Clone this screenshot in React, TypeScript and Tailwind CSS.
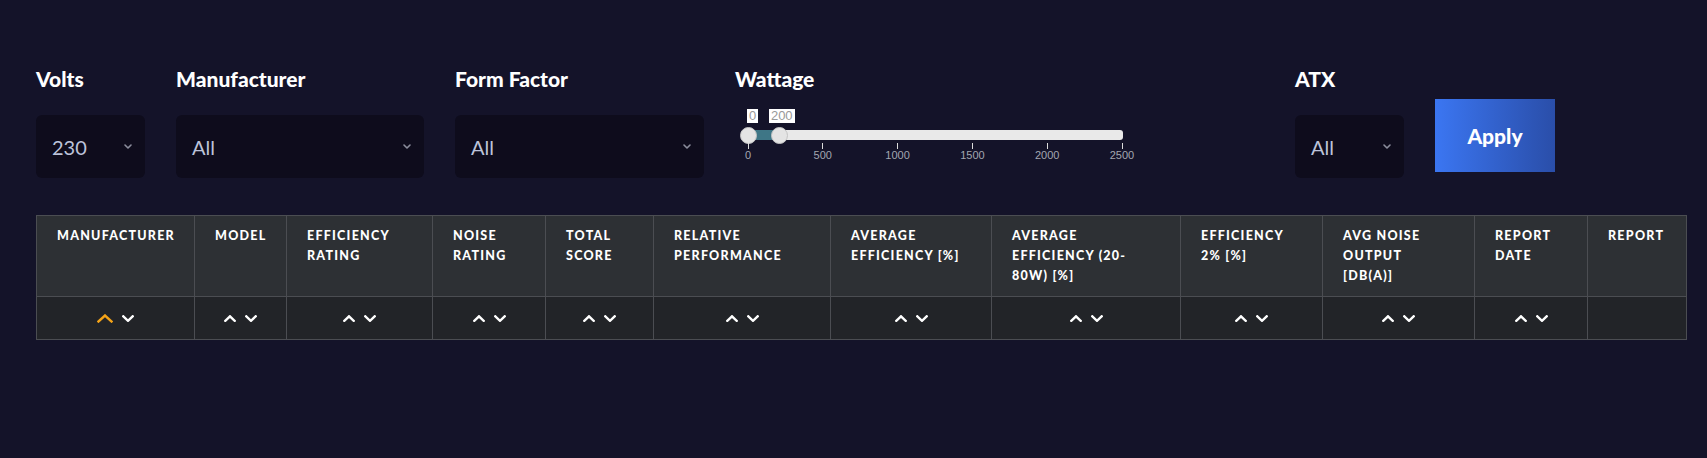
import React from 'react';

const columns: { lines: string[]; width: number; sortable: boolean; active?: boolean }[] = [
    { lines: ['MANUFACTURER'], width: 158, sortable: true, active: true },
    { lines: ['MODEL'], width: 92, sortable: true },
    { lines: ['EFFICIENCY', 'RATING'], width: 146, sortable: true },
    { lines: ['NOISE', 'RATING'], width: 113, sortable: true },
    { lines: ['TOTAL', 'SCORE'], width: 108, sortable: true },
    { lines: ['RELATIVE', 'PERFORMANCE'], width: 177, sortable: true },
    { lines: ['AVERAGE', 'EFFICIENCY [%]'], width: 161, sortable: true },
    { lines: ['AVERAGE', 'EFFICIENCY (20-', '80W) [%]'], width: 189, sortable: true },
    { lines: ['EFFICIENCY', '2% [%]'], width: 142, sortable: true },
    { lines: ['AVG NOISE', 'OUTPUT', '[DB(A)]'], width: 152, sortable: true },
    { lines: ['REPORT', 'DATE'], width: 113, sortable: true },
    { lines: ['REPORT'], width: 99, sortable: false },
];

const ticks = [0, 500, 1000, 1500, 2000, 2500];

function Caret() {
    return (
        <svg width="8" height="5" viewBox="0 0 8 5" className="text-[#8b8d9c]">
            <polyline points="1,1 4,4 7,1" fill="none" stroke="currentColor" strokeWidth="1.6" strokeLinecap="round" strokeLinejoin="round" />
        </svg>
    );
}

function Select({ value, width }: { value: string; width: string }) {
    return (
        <div className={`${width} h-[63px] mt-[22px] rounded-md bg-[#0e0c1c] flex items-center justify-between pl-4 pr-[13px]`}>
            <span className="text-[20px] text-[#bcc3da] font-['Lato',sans-serif]">{value}</span>
            <Caret />
        </div>
    );
}

function Chevron({ up, active }: { up: boolean; active?: boolean }) {
    const big = active && up;
    return (
        <svg width={big ? 16 : 12} height={big ? 9 : 7} viewBox={big ? '0 0 16 9' : '0 0 12 7'} className={big ? 'text-[#f5a418]' : 'text-white'}>
            <polyline
                points={big ? (up ? '1.5,7.5 8,1.5 14.5,7.5' : '1.5,1.5 8,7.5 14.5,1.5') : up ? '1.3,5.8 6,1.3 10.7,5.8' : '1.3,1.3 6,5.8 10.7,1.3'}
                fill="none"
                stroke="currentColor"
                strokeWidth="2.4"
                strokeLinecap="square"
            />
        </svg>
    );
}

function WattageSlider() {
    const left = 13;
    const span = 374;
    const pos = (v: number) => left + (v / 2500) * span;
    return (
        <div className="relative h-[70px] w-[420px] font-['Liberation_Sans',Arial,sans-serif]">
            {/* value tooltips */}
            <div className="absolute top-[16px] h-[14px] px-[2px] bg-white text-[13px] leading-[14px] text-[#999]" style={{ left: pos(0) - 1 }}>0</div>
            <div className="absolute top-[16px] h-[14px] px-[2px] bg-white text-[13px] leading-[14px] text-[#999]" style={{ left: pos(200) - 9 }}>200</div>
            {/* track */}
            <div className="absolute top-[37px] left-[6px] w-[382px] h-[10px] rounded-[3px] bg-[#e9e9e9]" />
            <div className="absolute top-[37px] h-[10px] bg-[#3e7686]" style={{ left: pos(0), width: pos(200) - pos(0) }} />
            {/* thumbs */}
            <div className="absolute top-[34px] w-[17px] h-[17px] rounded-full bg-[#e4e4e4] border border-[#c4c4c4]" style={{ left: pos(0) - 8.5 }} />
            <div className="absolute top-[34px] w-[17px] h-[17px] rounded-full bg-[#e4e4e4] border border-[#c4c4c4]" style={{ left: pos(200) - 7 }} />
            {/* ticks */}
            {ticks.map((t) => (
                <div key={t} className="absolute top-[50px] flex flex-col items-center w-[40px]" style={{ left: pos(t) - 20 }}>
                    <div className="w-px h-[6px] bg-[#dcdcdc]" />
                    <span className="text-[11px] leading-[12px] text-[#a3a6b0]">{t}</span>
                </div>
            ))}
        </div>
    );
}

export default function App() {
    return (
        <div className="min-h-screen h-[458px] bg-[#141329] pt-[65px] pl-[36px] overflow-hidden font-['Lato',sans-serif]">
            <div className="flex items-start gap-[31px]">
                <div className="flex flex-col">
                    <label className="text-[21px] leading-[28px] font-black text-white">Volts</label>
                    <Select value="230" width="w-[109px]" />
                </div>
                <div className="flex flex-col">
                    <label className="text-[21px] leading-[28px] font-black text-white">Manufacturer</label>
                    <Select value="All" width="w-[248px]" />
                </div>
                <div className="flex flex-col">
                    <label className="text-[21px] leading-[28px] font-black text-white">Form Factor</label>
                    <Select value="All" width="w-[249px]" />
                </div>
                <div className="flex flex-col w-[529px]">
                    <label className="text-[21px] leading-[28px] font-black text-white">Wattage</label>
                    <WattageSlider />
                </div>
                <div className="flex flex-col">
                    <label className="text-[21px] leading-[28px] font-black text-white">ATX</label>
                    <Select value="All" width="w-[109px]" />
                </div>
                <button className="mt-[34px] w-[120px] h-[73px] bg-gradient-to-r from-[#3b76f2] to-[#2a4ea9] text-white text-[21px] font-black">
                    Apply
                </button>
            </div>

            <div className="mt-[37px]">
                <table className="border-collapse table-fixed w-[1650px]">
                    <thead>
                        <tr className="bg-[#2d3034]">
                            {columns.map((c, i) => (
                                <th
                                    key={i}
                                    style={{ width: c.width }}
                                    className="h-[81px] align-top text-left border border-[#4b4d52] pt-[10px] pl-[20px] pr-[10px] text-[12.5px] leading-[20px] font-black tracking-[0.1em] text-white"
                                >
                                    {c.lines.map((l, j) => (
                                        <div key={j} className="whitespace-nowrap">{l}</div>
                                    ))}
                                </th>
                            ))}
                        </tr>
                    </thead>
                    <tbody>
                        <tr className="bg-[#222428]">
                            {columns.map((c, i) => (
                                <td key={i} className="h-[43px] border border-[#4b4d52] align-middle">
                                    {c.sortable && (
                                        <div className="flex items-center justify-center gap-[9px] pt-[1px]">
                                            <Chevron up active={c.active} />
                                            <Chevron up={false} />
                                        </div>
                                    )}
                                </td>
                            ))}
                        </tr>
                    </tbody>
                </table>
            </div>
        </div>
    );
}
